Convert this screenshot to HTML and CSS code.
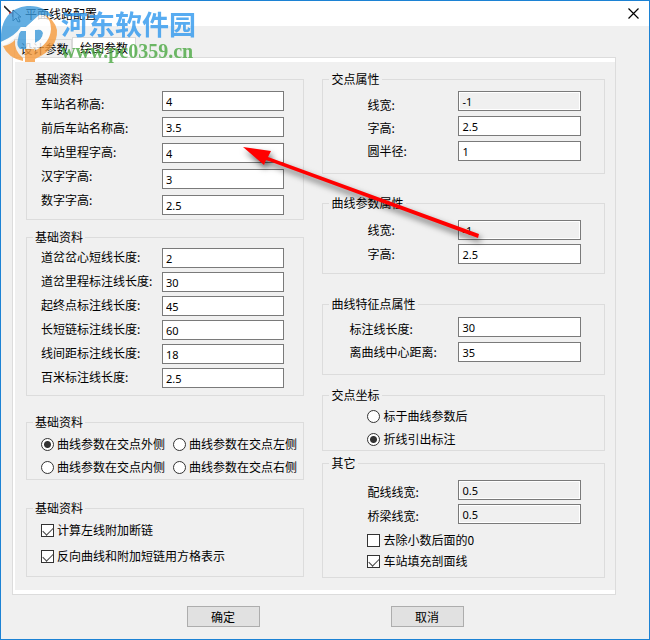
FILE: index.html
```html
<!DOCTYPE html>
<html lang="zh-CN">
<head>
<meta charset="utf-8">
<title>平面线路配置</title>
<link rel="stylesheet" href="styles.css">
</head>
<body>
<main class="window">
  <header class="titlebar">
    <svg class="app-icon" viewBox="0 0 18 18" aria-hidden="true">
      <path d="M0 1L7 8M9 10L16 17" stroke="#222" stroke-width="1.6"/>
      <path d="M5 8h4v4" stroke="#e22" stroke-width="1.6" fill="none"/>
      <path d="M9 5v11l3-3 2 4 2-1-2-4h3z" fill="#fff" stroke="#234" stroke-width="1"/>
    </svg>
    <h1 class="title">平面线路配置</h1>
    <button class="close" type="button" aria-label="关闭">
      <svg viewBox="0 0 11 11"><path d="M.5 .5L10.5 10.5M10.5 .5L.5 10.5" stroke="#000" stroke-width="1.2"/></svg>
    </button>
  </header>

  <nav class="tabs" role="tablist">
    <button class="tab" type="button" role="tab">设计参数</button>
    <button class="tab active" type="button" role="tab">绘图参数</button>
  </nav>

  <form class="panel">
    <div class="column">
      <fieldset class="group names">
        <legend>基础资料</legend>
        <div class="fields">
          <div class="labels">
            <label for="a1">车站名称高:</label>
            <label for="a2">前后车站名称高:</label>
            <label for="a3">车站里程字高:</label>
            <label for="a4">汉字字高:</label>
            <label for="a5">数字字高:</label>
          </div>
          <div class="inputs">
            <input id="a1" type="text" value="4">
            <input id="a2" type="text" value="3.5">
            <input id="a3" type="text" value="4">
            <input id="a4" type="text" value="3">
            <input id="a5" type="text" value="2.5">
          </div>
        </div>
      </fieldset>

      <fieldset class="group lengths">
        <legend>基础资料</legend>
        <div class="fields">
          <div class="labels">
            <label for="b1">道岔岔心短线长度:</label>
            <label for="b2">道岔里程标注线长度:</label>
            <label for="b3">起终点标注线长度:</label>
            <label for="b4">长短链标注线长度:</label>
            <label for="b5">线间距标注线长度:</label>
            <label for="b6">百米标注线长度:</label>
          </div>
          <div class="inputs">
            <input id="b1" type="text" value="2">
            <input id="b2" type="text" value="30">
            <input id="b3" type="text" value="45">
            <input id="b4" type="text" value="60">
            <input id="b5" type="text" value="18">
            <input id="b6" type="text" value="2.5">
          </div>
        </div>
      </fieldset>

      <fieldset class="group sides">
        <legend>基础资料</legend>
        <div class="choices">
          <label class="choice"><input type="radio" name="side" checked>曲线参数在交点外侧</label>
          <label class="choice"><input type="radio" name="side">曲线参数在交点左侧</label>
          <label class="choice"><input type="radio" name="side">曲线参数在交点内侧</label>
          <label class="choice"><input type="radio" name="side">曲线参数在交点右侧</label>
        </div>
      </fieldset>

      <fieldset class="group chains">
        <legend>基础资料</legend>
        <div class="choices">
          <label class="choice"><input type="checkbox" checked>计算左线附加断链</label>
          <label class="choice"><input type="checkbox" checked>反向曲线和附加短链用方格表示</label>
        </div>
      </fieldset>
    </div>

    <div class="column right">
      <fieldset class="group crossing">
        <legend>交点属性</legend>
        <div class="fields">
          <div class="labels">
            <label for="e1">线宽:</label>
            <label for="e2">字高:</label>
            <label for="e3">圆半径:</label>
          </div>
          <div class="inputs">
            <input id="e1" type="text" value="-1" readonly>
            <input id="e2" type="text" value="2.5">
            <input id="e3" type="text" value="1">
          </div>
        </div>
      </fieldset>

      <fieldset class="group curve">
        <legend>曲线参数属性</legend>
        <div class="fields">
          <div class="labels">
            <label for="f1">线宽:</label>
            <label for="f2">字高:</label>
          </div>
          <div class="inputs">
            <input id="f1" type="text" value="-1" readonly>
            <input id="f2" type="text" value="2.5">
          </div>
        </div>
      </fieldset>

      <fieldset class="group feature">
        <legend>曲线特征点属性</legend>
        <div class="fields">
          <div class="labels">
            <label for="g1">标注线长度:</label>
            <label for="g2">离曲线中心距离:</label>
          </div>
          <div class="inputs">
            <input id="g1" type="text" value="30">
            <input id="g2" type="text" value="35">
          </div>
        </div>
      </fieldset>

      <fieldset class="group coords">
        <legend>交点坐标</legend>
        <div class="choices">
          <label class="choice"><input type="radio" name="coord">标于曲线参数后</label>
          <label class="choice"><input type="radio" name="coord" checked>折线引出标注</label>
        </div>
      </fieldset>

      <fieldset class="group other">
        <legend>其它</legend>
        <div class="fields">
          <div class="labels">
            <label for="i1">配线线宽:</label>
            <label for="i2">桥梁线宽:</label>
          </div>
          <div class="inputs">
            <input id="i1" type="text" value="0.5" readonly>
            <input id="i2" type="text" value="0.5" readonly>
          </div>
        </div>
        <div class="choices">
          <label class="choice"><input type="checkbox">去除小数后面的0</label>
          <label class="choice"><input type="checkbox" checked>车站填充剖面线</label>
        </div>
      </fieldset>
    </div>
  </form>

  <footer class="actions">
    <button class="action" type="button">确定</button>
    <button class="action" type="button">取消</button>
  </footer>

  <div class="watermark">
    <svg class="logo" viewBox="0 0 58 62" aria-hidden="true">
      <path d="M0 37C0 15 13 5 29 5C39 5 47 9 52 16Q46 13 38 15L25 26H20Q15 34 0 41Z" fill="#3d9bdc"/>
      <path d="M19 29H25V48H19Q15 44 17 38Z" fill="#3d9bdc"/>
      <path d="M34 29Q41 27 42 32Q42 38 34 42Z" fill="#3d9bdc"/>
      <path d="M0 41Q14 36 20 26L25 26L38 14Q51 13 51 28Q50 43 34 49V42Q42 38 42 32Q41 27 34 29V47H25V30H20Q14 39 2 45Z" fill="#fff"/>
      <path d="M2 45Q9 44 14 39Q13 50 22 57V60Q7 57 2 45Z" fill="#f79b3c"/>
      <path d="M43 14Q53 17 56 29Q57 48 34 58V61H24V48H33V50Q49 43 50 28Q50 18 43 14Z" fill="#f79b3c"/>
    </svg>
    <div class="mark-text">
      <span class="mark-name">河东软件园</span>
      <span class="mark-url">www.pc0359.cn</span>
    </div>
  </div>

  <svg class="arrow" viewBox="0 0 250 110" aria-hidden="true">
    <path d="M3 7L31 11L28 17L239 94L238 98L26 20L24 25Z" fill="#f00"/>
  </svg>
</main>
</body>
</html>
```
FILE: styles.css
```css
* {
  box-sizing: border-box;
}

body {
  margin: 0;
  font: 12px/16px "Noto Sans CJK SC", sans-serif;
  color: #000;
}

button,
input {
  margin: 0;
  font: inherit;
  color: inherit;
}

.window {
  position: relative;
  display: flex;
  flex-direction: column;
  min-height: 100vh;
  border: 1px solid #1c82d4;
  background: #f0f0f0;
}

.titlebar {
  display: flex;
  align-items: center;
  height: 25px;
  padding: 0 8px 0 3px;
  background: #fff;
}

.app-icon {
  width: 18px;
  height: 18px;
}

.title {
  flex: 1;
  margin: 0 0 0 3px;
  font-size: 12px;
  font-weight: 400;
}

.close {
  display: flex;
  padding: 2px;
  border: 0;
  background: none;
}

.close svg {
  width: 11px;
  height: 11px;
}

.tabs {
  display: flex;
  align-items: flex-end;
  padding: 11px 0 0 13px;
}

.tab {
  height: 18px;
  width: 58px;
  padding: 0 0 0 3px;
  border: 1px solid #d9d9d9;
  border-bottom: 0;
  background: #f0f0f0;
  white-space: nowrap;
}

.tab.active {
  width: 64px;
  height: 20px;
  padding: 0;
  background: #fff;
}

.panel {
  display: grid;
  grid-template-columns: 139fr 141fr;
  gap: 18px;
  margin: 0 33px 0 11px;
  padding: 13px 10px 16px 13px;
  border: 1px solid #dcdcdc;
  box-shadow: inset 2px 4px #fff, inset 0 -4px #fff;
}

.column {
  display: flex;
  flex-direction: column;
}

.group {
  min-width: 0;
  margin: 0;
  padding: 0 6px;
  border: 1px solid #dcdcdc;
}

legend {
  padding: 0 2px;
}

.fields {
  display: grid;
  grid-template-columns: 121px 1fr;
  padding: 0 13px 0 8px;
}

.right .fields {
  grid-template-columns: 91px 1fr;
  padding: 0 17px 0 38px;
}

.labels,
.inputs {
  display: flex;
  flex-direction: column;
}

.labels {
  gap: 8px;
  white-space: nowrap;
}

.inputs {
  gap: 4px;
}

.inputs input {
  width: 100%;
  height: 20px;
  padding: 0 3px;
  border: 1px solid #7a7a7a;
  border-radius: 0;
  background: #fff;
  font: 11px/16px "Noto Sans", sans-serif;
}

.inputs input:read-only {
  background: #f0f0f0;
  box-shadow: inset 0 0 0 1px #fff;
}

.choices {
  display: grid;
  padding-left: 8px;
}

.right .choices {
  padding-left: 38px;
}

.choice {
  display: flex;
  align-items: center;
  gap: 3px;
  white-space: nowrap;
}

.choice input {
  appearance: none;
  flex: none;
  width: 13px;
  height: 13px;
  border: 1px solid #333;
  background: #fff;
}

.choice input[type="radio"] {
  border-radius: 50%;
}

.choice input[type="radio"]:checked {
  background: radial-gradient(circle, #333 3px, #fff 4px);
}

.choice input[type="checkbox"]:checked::before {
  content: "";
  display: block;
  width: 9px;
  height: 5px;
  margin: 2px 0 0 1px;
  border: solid #444;
  border-width: 0 0 1px 1px;
  transform: rotate(-45deg);
}

.names .labels { padding-top: 9px; }
.names .inputs { gap: 6px; padding: 4px 0; }

.lengths { margin-top: 9px; }
.lengths .labels { padding-top: 4px; }
.lengths .inputs { padding: 3px 0 7px; }

.sides { margin-top: 18px; }
.sides .choices {
  grid-template-columns: 132px 1fr;
  row-gap: 7px;
  padding-top: 6px;
  padding-bottom: 4px;
}

.chains { margin-top: 20px; }
.chains .choices {
  row-gap: 10px;
  padding-top: 6px;
  padding-bottom: 12px;
}

.crossing .labels { gap: 7px; padding-top: 10px; }
.crossing .inputs { gap: 5px; padding: 4px 0 12px; }

.curve { margin-top: 21px; }
.curve .labels { padding-top: 11px; }
.curve .inputs { padding: 9px 0; }

.feature { margin-top: 22px; }
.right .feature .fields {
  grid-template-columns: 109px 1fr;
  padding-left: 20px;
}
.feature .labels { gap: 7px; padding-top: 9px; }
.feature .inputs { gap: 5px; padding: 5px 0 12px; }

.coords { margin-top: 12px; }
.coords .choices {
  row-gap: 7px;
  padding-top: 5px;
  padding-bottom: 3px;
}

.other { margin-top: 4px; }
.other .labels { padding-top: 13px; }
.other .inputs { padding-top: 9px; }
.other .choices {
  row-gap: 5px;
  padding-top: 8px;
  padding-bottom: 8px;
}

.actions {
  display: flex;
  justify-content: center;
  gap: 131px;
  padding: 11px 0 12px;
}

.action {
  width: 73px;
  height: 21px;
  padding: 0;
  border: 1px solid #adadad;
  background: #e1e1e1;
}

.watermark {
  position: absolute;
  top: 0;
  left: 0;
  display: flex;
  pointer-events: none;
  opacity: 0.8;
}

.logo {
  width: 58px;
  height: 62px;
}

.mark-text {
  display: flex;
  flex-direction: column;
  padding: 7px 0 0 2px;
  white-space: nowrap;
}

.mark-name {
  font-size: 27px;
  font-weight: 700;
  line-height: 32px;
  color: #2f98ee;
}

.mark-url {
  font: 700 20px/22px "Liberation Serif", serif;
  color: #4aa842;
}

.arrow {
  position: absolute;
  top: 139px;
  left: 239px;
  width: 250px;
  height: 110px;
  pointer-events: none;
  filter: drop-shadow(2px 4px 3px rgba(0, 0, 0, 0.6));
}
```
